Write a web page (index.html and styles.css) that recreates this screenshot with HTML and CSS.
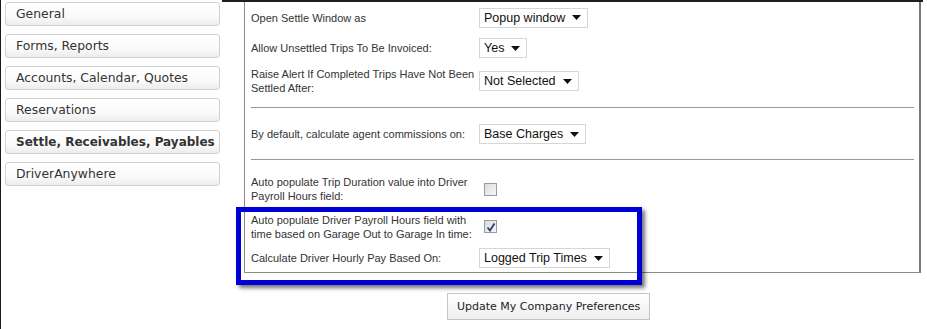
FILE: index.html
```html
<!DOCTYPE html>
<html lang="en">
<head>
    <meta charset="UTF-8">
    <title>Company Preferences</title>
    <link rel="stylesheet" href="styles.css">
</head>
<body>
    <div class="page">
        <div class="menu">
            <div class="menu-item">General</div>
            <div class="menu-item">Forms, Reports</div>
            <div class="menu-item">Accounts, Calendar, Quotes</div>
            <div class="menu-item">Reservations</div>
            <div class="menu-item active">Settle, Receivables, Payables</div>
            <div class="menu-item">DriverAnywhere</div>
        </div>
        <div class="main">
            <div class="panel">
                <div class="row r1">
                    <div class="label">Open Settle Window as</div>
                    <div class="select">Popup window <svg width="9" height="5"><path d="M0 0h9L4.5 5z" fill="#111"/></svg></div>
                </div>
                <div class="row r2">
                    <div class="label">Allow Unsettled Trips To Be Invoiced:</div>
                    <div class="select">Yes <svg width="9" height="5"><path d="M0 0h9L4.5 5z" fill="#111"/></svg></div>
                </div>
                <div class="row r3">
                    <div class="label">Raise Alert If Completed Trips Have Not Been Settled After:</div>
                    <div class="select">Not Selected <svg width="9" height="5"><path d="M0 0h9L4.5 5z" fill="#111"/></svg></div>
                </div>
                <hr class="sep sep1">
                <div class="row r4">
                    <div class="label">By default, calculate agent commissions on:</div>
                    <div class="select">Base Charges <svg width="9" height="5"><path d="M0 0h9L4.5 5z" fill="#111"/></svg></div>
                </div>
                <hr class="sep sep2">
                <div class="row r5">
                    <div class="label">Auto populate Trip Duration value into Driver Payroll Hours field:</div>
                    <div class="check"></div>
                </div>
                <div class="row r6">
                    <div class="label">Auto populate Driver Payroll Hours field with time based on Garage Out to Garage In time:</div>
                    <div class="check checked"><svg width="10" height="10"><path d="M1.5 5.5l2.5 3 4.5-7" stroke="#2b3c7a" stroke-width="1.8" fill="none"/></svg></div>
                </div>
                <div class="row r7">
                    <div class="label">Calculate Driver Hourly Pay Based On:</div>
                    <div class="select">Logged Trip Times <svg width="9" height="5"><path d="M0 0h9L4.5 5z" fill="#111"/></svg></div>
                </div>
            </div>
            <div class="actions">
                <button class="update-button">Update My Company Preferences</button>
            </div>
        </div>
        <div class="highlight"></div>
    </div>
</body>
</html>
```

FILE: styles.css
```css
body {
    margin: 0;
    background-color: #ffffff;
    color: #222222;
    font-family: "Liberation Sans", Arial, sans-serif;
}
.page {
    position: relative;
    display: flex;
    height: 329px;
    border-left: 1px solid #1a1a1a;
    box-sizing: border-box;
}
.menu {
    width: 221px;
    padding: 2px 0 0 4px;
    box-sizing: border-box;
}
.menu-item {
    width: 215px;
    height: 24px;
    box-sizing: border-box;
    margin-bottom: 8px;
    padding-left: 10px;
    border: 1px solid #d2d2d2;
    border-radius: 3px;
    background: linear-gradient(#ffffff 0%, #fbfbfb 60%, #ececec 100%);
    font-family: "DejaVu Sans", Verdana, sans-serif;
    font-size: 12.4px;
    line-height: 22px;
    color: #333333;
}
.menu-item.active {
    font-weight: bold;
    font-size: 12px;
}
.main {
    width: 701px;
    border-top: 2px solid #1e1e1e;
}
.panel {
    width: 677px;
    height: 271px;
    margin-left: 22px;
    box-sizing: border-box;
    border: 1px solid #8a8a8a;
    border-top: none;
    border-right: 2px solid #777777;
    padding-left: 6px;
}
.row {
    display: flex;
    align-items: center;
}
.label {
    width: 228px;
    font-size: 11px;
    line-height: 14px;
    color: #333333;
}
.r1 { height: 31px; }
.r2 { height: 30px; }
.r3 { height: 36px; }
.r4 { height: 36px; }
.r5 { height: 36px; }
.r6 { height: 39px; }
.r7 { height: 24px; }
.sep {
    margin: 0;
    width: 663px;
    height: 0;
    border: none;
    border-top: 1px solid #9a9a9a;
}
.sep1 { margin-top: 8px; margin-bottom: 8px; }
.sep2 { margin-top: 7px; margin-bottom: 11px; }
.select {
    height: 20px;
    box-sizing: border-box;
    padding: 0 6px 0 4px;
    border: 1px solid #d6d6d6;
    display: flex;
    align-items: center;
    gap: 7px;
    font-size: 12.5px;
    color: #111111;
    background-color: #ffffff;
}
.check {
    width: 13px;
    height: 13px;
    box-sizing: border-box;
    margin-left: 5px;
    border: 1px solid #9b9b9b;
    background: linear-gradient(135deg, #dcdcdc, #f6f6f6);
    display: flex;
    align-items: center;
    justify-content: center;
}
.actions {
    padding: 20px 0 0 225px;
}
.update-button {
    height: 27px;
    padding: 0 9px;
    border: 1px solid #c4c4c4;
    border-radius: 0;
    background: linear-gradient(#ffffff, #eeeeee);
    font-family: "DejaVu Sans", Verdana, sans-serif;
    font-size: 11px;
    color: #222222;
}
.highlight {
    position: absolute;
    left: 235px;
    top: 207px;
    width: 406px;
    height: 78px;
    box-sizing: border-box;
    border: 5px solid #0000d4;
    box-shadow: 3px 3px 4px rgba(0, 0, 0, 0.55);
}
```
